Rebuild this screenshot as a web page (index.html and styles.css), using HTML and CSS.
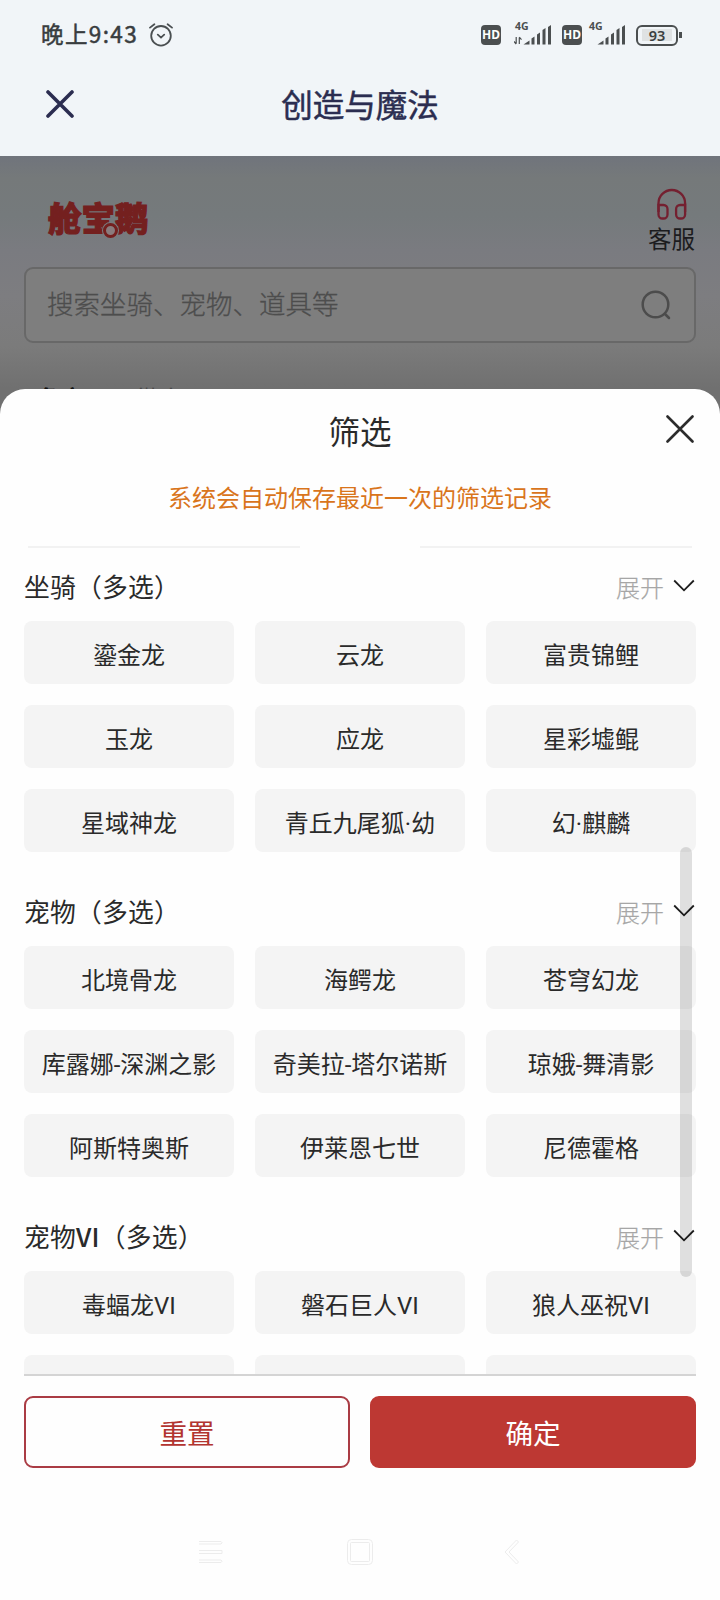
FILE: index.html
```html
<!DOCTYPE html>
<html lang="zh-CN">
<head>
    <meta charset="UTF-8">
    <meta name="viewport" content="width=device-width, initial-scale=1.0">
    <title>创造与魔法</title>
    <link rel="stylesheet" href="styles.css">
</head>
<body>
    <header class="top">
        <div class="status-bar">
            <span class="time">晚上9:43</span>
            <svg class="alarm" width="24" height="24" viewBox="0 0 24 24" fill="none" stroke="#4a4f51" stroke-width="1.8" stroke-linecap="round">
                <circle cx="12" cy="12.8" r="9.8"/>
                <path d="M1 4.6L5.4 1.2M23 4.6L18.6 1.2M8.8 11.6l3.2 3 3.2-3"/>
            </svg>
            <div class="status-icons">
                <span class="hd">HD</span>
                <svg class="signal" width="38" height="30" viewBox="0 -6 38 30" fill="#4b4f50">
                    <text x="1" y="9" class="net">4G</text>
                    <path d="M9.5 23.5l6-4v4zM17.5 17.5l3-2v8h-3zM23 13.5l3-2v12h-3zM28.5 9l3-2v16.5h-3zM34 6l3-2v19.5h-3z"/>
                    <path d="M2.2 16v6.5M0 20.5l2.2 2.5M5.3 23v-6.5M5.3 16.2l2.2 2.5" fill="none" stroke="#4b4f50" stroke-width="1.2"/>
                </svg>
                <span class="hd">HD</span>
                <svg class="signal second" width="38" height="30" viewBox="0 -6 38 30" fill="#4b4f50">
                    <text x="1" y="9" class="net">4G</text>
                    <path d="M9.5 23.5l6-4v4zM17.5 17.5l3-2v8h-3zM23 13.5l3-2v12h-3zM28.5 9l3-2v16.5h-3zM34 6l3-2v19.5h-3z"/>
                </svg>
                <span class="battery"><b>93</b></span>
            </div>
        </div>
        <div class="nav-bar">
            <svg class="nav-close" width="28" height="28" viewBox="0 0 28 28" stroke="#2b2d50" stroke-width="3.6" stroke-linecap="round">
                <path d="M2 2l24 24M26 2L2 26"/>
            </svg>
            <h1>创造与魔法</h1>
        </div>
    </header>

    <main class="page">
        <div class="brand-row">
            <div class="logo">舱宝鹅</div>
            <div class="service">
                <svg width="30" height="32" viewBox="0 0 30 32" fill="none" stroke="#742030" stroke-width="2.3">
                    <path d="M1.5 24V15.3a13.3 13.3 0 0 1 26.6 0V24"/>
                    <path d="M1.5 17h5a4 4 0 0 1 4 4v5.5a4 4 0 0 1-4 4h-1a4 4 0 0 1-4-4zM28.1 17h-5a4 4 0 0 0-4 4v5.5a4 4 0 0 0 4 4h1a4 4 0 0 0 4-4z"/>
                </svg>
                <span>客服</span>
            </div>
        </div>
        <div class="search">
            <span>搜索坐骑、宠物、道具等</span>
            <svg width="30" height="30" viewBox="0 0 30 30" fill="none" stroke="#4c4c4c" stroke-width="2.5" stroke-linecap="round">
                <circle cx="14.5" cy="14.5" r="12.8"/>
                <path d="M24 24l4 4"/>
            </svg>
        </div>
        <div class="tabs">
            <span class="tab active">角宠</span>
            <span class="tab">微店</span>
        </div>
    </main>

    <section class="sheet">
        <div class="sheet-head">
            <h2>筛选</h2>
            <svg class="sheet-close" width="28" height="28" viewBox="0 0 28 28" stroke="#2c2c2c" stroke-width="2.6" stroke-linecap="round">
                <path d="M1.5 1.5l25 25M26.5 1.5l-25 25"/>
            </svg>
        </div>
        <p class="tip">系统会自动保存最近一次的筛选记录</p>

        <div class="scroll">
            <div class="divider"><i></i><i></i></div>

            <div class="group">
                <div class="group-head">
                    <h3>坐骑（多选）</h3>
                    <span class="more">展开</span>
                    <svg width="22" height="14" viewBox="0 0 22 14"><path d="M1.2 1.5L11 11.3l9.8-9.8"/></svg>
                </div>
                <div class="chips">
                    <span>鎏金龙</span><span>云龙</span><span>富贵锦鲤</span>
                    <span>玉龙</span><span>应龙</span><span>星彩墟鲲</span>
                    <span>星域神龙</span><span>青丘九尾狐·幼</span><span>幻·麒麟</span>
                </div>
            </div>

            <div class="group">
                <div class="group-head">
                    <h3>宠物（多选）</h3>
                    <span class="more">展开</span>
                    <svg width="22" height="14" viewBox="0 0 22 14"><path d="M1.2 1.5L11 11.3l9.8-9.8"/></svg>
                </div>
                <div class="chips">
                    <span>北境骨龙</span><span>海鳄龙</span><span>苍穹幻龙</span>
                    <span>库露娜-深渊之影</span><span>奇美拉-塔尔诺斯</span><span>琼娥-舞清影</span>
                    <span>阿斯特奥斯</span><span>伊莱恩七世</span><span>尼德霍格</span>
                </div>
            </div>

            <div class="group">
                <div class="group-head">
                    <h3>宠物<b>VI</b>（多选）</h3>
                    <span class="more">展开</span>
                    <svg width="22" height="14" viewBox="0 0 22 14"><path d="M1.2 1.5L11 11.3l9.8-9.8"/></svg>
                </div>
                <div class="chips">
                    <span>毒蝠龙VI</span><span>磐石巨人VI</span><span>狼人巫祝VI</span>
                    <span></span><span></span><span></span>
                </div>
            </div>

            <div class="scrollbar"></div>
        </div>

        <div class="actions">
            <button class="btn reset">重置</button>
            <button class="btn confirm">确定</button>
        </div>

        <div class="system-nav">
            <svg width="24" height="26" viewBox="0 0 24 26"><path d="M0 2.5h22q2 1.2 0 2.5H0M0 11.5h23v3H0M0 21h22q2 1.2 0 2.5H0"/></svg>
            <svg class="home" width="26" height="26" viewBox="0 0 26 26"><rect x=".5" y=".5" width="25" height="25" rx="4"/><rect x="3.5" y="3.5" width="19" height="19" rx="1"/></svg>
            <svg width="16" height="26" viewBox="0 0 16 26"><path d="M12.5 1L1 13l11.5 12 2-2L5 13l9.5-10z"/></svg>
        </div>
    </section>
</body>
</html>
```

FILE: styles.css
```css
* {
    box-sizing: border-box;
}
body {
    margin: 0;
    width: 720px;
    height: 1600px;
    overflow: hidden;
    position: relative;
    background: #fefefe;
    font-family: "Noto Sans CJK SC", sans-serif;
    color: #2a2a2a;
}
h1, h2, h3, p {
    margin: 0;
    font-weight: 400;
}
svg {
    display: block;
    flex: none;
}

/* header */
.top {
    height: 156px;
    background: #f1f5f8;
}
.status-bar {
    height: 70px;
    padding: 0 42px 0 41px;
    display: flex;
    align-items: center;
}
.time {
    margin-bottom: 4px;
    font-size: 22.5px;
    letter-spacing: 1.4px;
    color: #383c3e;
    -webkit-text-stroke: 0.5px #383c3e;
}
.alarm {
    margin-left: 11px;
}
.status-icons {
    margin-left: auto;
    display: flex;
    align-items: center;
}
.hd {
    width: 20px;
    height: 20px;
    border-radius: 4px;
    background: #4b4f50;
    color: #fff;
    font: bold 12px/20px "Noto Sans", sans-serif;
    text-align: center;
}
.signal {
    margin: 0 10px 10px 13px;
}
.signal.second {
    margin-left: 6px;
}
.net {
    font: bold 10.5px "Noto Sans", sans-serif;
}
.battery {
    position: relative;
    width: 42px;
    height: 21px;
    padding: 2px 4px;
    border: 2.5px solid #4b4f50;
    border-radius: 6px;
}
.battery::after {
    content: "";
    position: absolute;
    right: -6px;
    top: 5px;
    width: 3px;
    height: 6px;
    background: #4b4f50;
}
.battery b {
    display: block;
    height: 12px;
    background: #dfe2e3;
    color: #3b3f40;
    font: 600 14.5px/12px "Noto Sans", sans-serif;
    text-align: center;
}
.nav-bar {
    position: relative;
    height: 70px;
    padding-bottom: 5px;
    display: flex;
    align-items: center;
    justify-content: center;
}
.nav-close {
    position: absolute;
    left: 46px;
    top: 20px;
}
.nav-bar h1 {
    font-size: 31.5px;
    line-height: 46px;
    color: #2b2d50;
    -webkit-text-stroke: 0.5px #2b2d50;
}

/* dimmed page */
.page {
    height: 260px;
    padding: 0 24px;
    background: linear-gradient(#70747c 0, #75797a 22px, #757a7c 60px, #7a7b80 95px, #7d7d80 140px, #7b7b7b 190px, #707070 232px);
}
.brand-row {
    height: 111px;
    display: flex;
    justify-content: space-between;
}
.logo {
    position: relative;
    margin: 36px 0 0 24px;
    font-size: 33.5px;
    line-height: 50px;
    font-weight: 900;
    color: #74201f;
    -webkit-text-stroke: 1.2px #74201f;
}
/* round eye on the middle character */
.logo::after {
    content: "";
    position: absolute;
    left: 55px;
    top: 31px;
    width: 9px;
    height: 9px;
    border: 3px solid #74201f;
    border-radius: 50%;
    background: #8a7c7e;
    box-shadow: 0 0 0 1px #797b7f;
}
.service {
    padding: 32px 1px 0 0;
    display: flex;
    flex-direction: column;
    align-items: center;
    font-size: 23.5px;
    line-height: 36px;
    color: #1c1c1e;
}
.search {
    height: 76px;
    padding: 0 23px 0 21px;
    display: flex;
    align-items: center;
    justify-content: space-between;
    border: 2px solid #686868;
    border-radius: 9px;
    background: #7e7e7e;
    font-size: 26.5px;
    color: #4d4d4d;
}
.search span {
    padding-bottom: 5px;
    font-weight: 300;
    -webkit-text-stroke: 0.3px #4d4d4d;
}
.tabs {
    padding: 38px 14px 0;
    display: flex;
    gap: 52px;
    font-size: 23px;
    line-height: 32px;
    color: #494949;
}
.tab.active {
    font-weight: 700;
    color: #111;
}

/* filter sheet */
.sheet {
    position: absolute;
    left: 0;
    top: 389px;
    width: 720px;
    height: 1211px;
    padding: 0 24px;
    border-radius: 25px 25px 0 0;
    background: #fefefe;
}
.sheet-head {
    position: relative;
    height: 86px;
    text-align: center;
}
.sheet-head h2 {
    font-size: 31.5px;
    line-height: 83px;
}
.sheet-close {
    position: absolute;
    right: 2px;
    top: 26px;
}
.tip {
    height: 68px;
    font-size: 24px;
    line-height: 44px;
    text-align: center;
    color: #d9751c;
}
.scroll {
    position: relative;
    height: 833px;
    overflow: hidden;
    border-bottom: 2px solid #d4d4d4;
}
.divider {
    height: 20px;
    padding: 3px 4px 0;
    display: flex;
    justify-content: space-between;
}
.divider i {
    width: 272px;
    height: 2px;
    background: #f2f2f2;
}
.group {
    height: 325px;
}
.group-head {
    height: 58px;
    padding: 0 1px 11px 0;
    display: flex;
    align-items: center;
}
.group-head h3 {
    margin: -2px auto 0 0;
    font-size: 25.8px;
    line-height: 40px;
    letter-spacing: 0.2px;
}
.group-head b {
    font-weight: 500;
}
.more {
    margin-right: 9px;
    font-size: 24px;
    line-height: 40px;
    font-weight: 300;
    color: #a6a6a6;
    -webkit-text-stroke: 0.2px #a6a6a6;
}
.group-head svg {
    margin-bottom: 2px;
    fill: none;
    stroke: #1d1d1d;
    stroke-width: 1.8;
}
.chips {
    display: grid;
    grid-template-columns: repeat(3, 1fr);
    grid-auto-rows: 63px;
    gap: 21px;
}
.chips span {
    border-radius: 8px;
    background: #f4f4f4;
    font-family: Roboto, "Noto Sans CJK SC", sans-serif;
    font-size: 24px;
    line-height: 71px;
    text-align: center;
    white-space: nowrap;
}
.scrollbar {
    position: absolute;
    right: 4px;
    top: 304px;
    width: 12px;
    height: 430px;
    border-radius: 6px;
    background: rgba(0, 0, 0, 0.12);
}
.actions {
    padding-top: 20px;
    display: flex;
    gap: 20px;
}
.btn {
    flex: 1;
    height: 72px;
    padding: 0;
    border: 2px solid #bd3833;
    border-radius: 9px;
    font-family: inherit;
    font-size: 27.6px;
    line-height: 66px;
}
.reset {
    background: #fefefe;
    border-color: #aa3c44;
    color: #b23430;
}
.confirm {
    background: #bd3833;
    color: #fff;
}
.system-nav {
    height: 132px;
    padding: 36px 176px 0 175px;
    display: flex;
    align-items: center;
    justify-content: space-between;
}
.system-nav svg {
    fill: none;
    stroke: #ececec;
}
.system-nav .home {
    margin-right: 7px;
}
```
